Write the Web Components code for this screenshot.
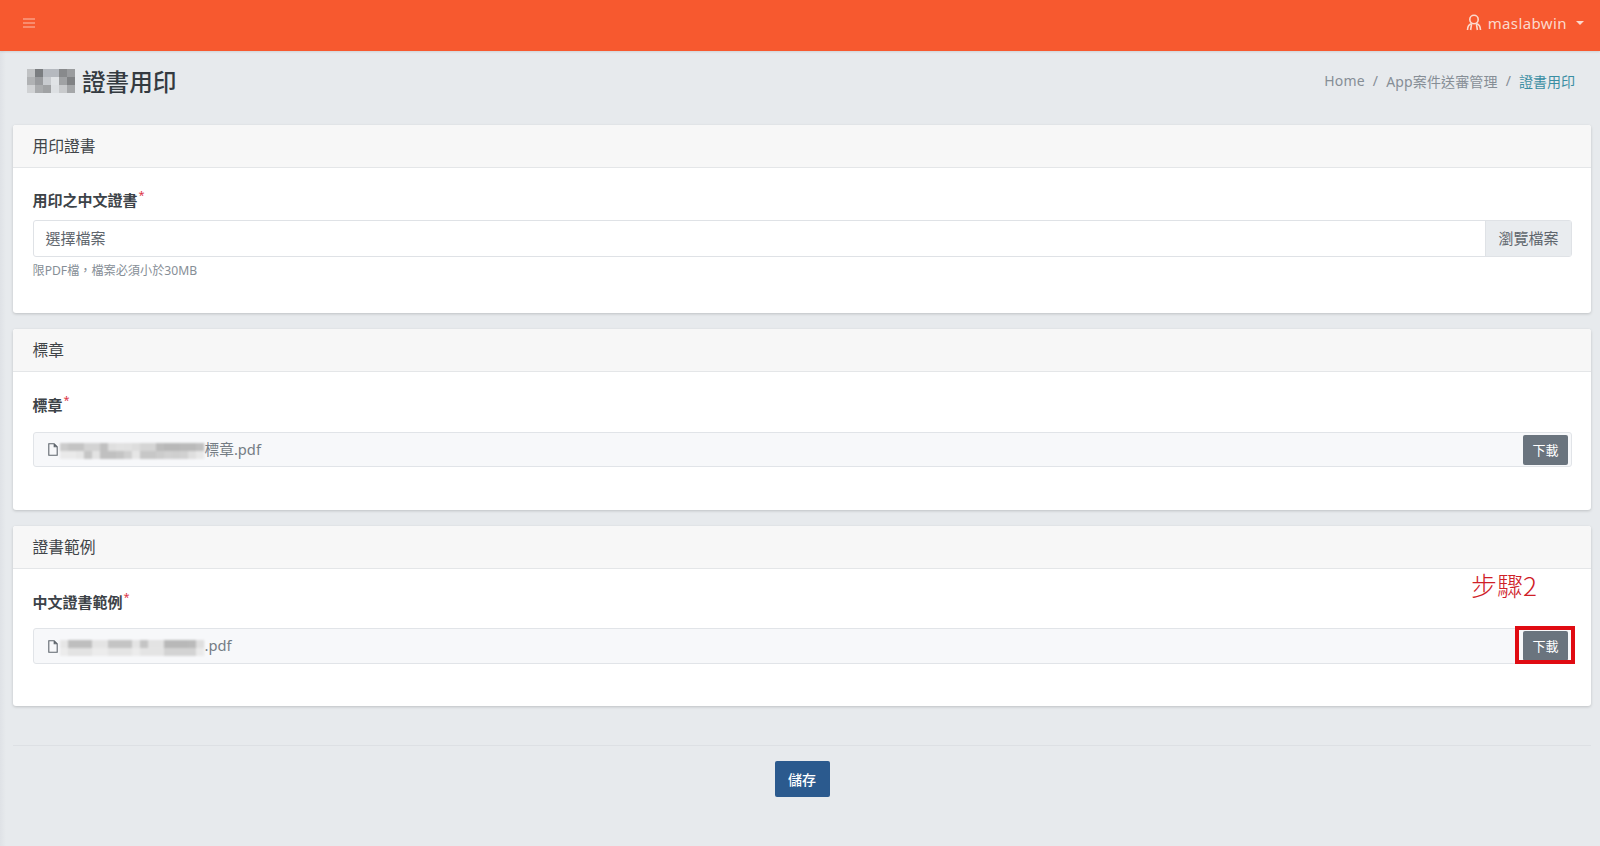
<!DOCTYPE html>
<html lang="zh-Hant">
<head>
<meta charset="utf-8">
<title>證書用印</title>
<style>
    html, body { margin: 0; padding: 0; }
    body {
        background: #e7eaed;
        color: #343a40;
        font-family: "Noto Sans", "Noto Sans CJK TC", sans-serif;
        font-size: 14px;
        height: 846px;
        overflow: hidden;
    }
</style>
</head>
<body>
<app-page>
    <app-topbar slot="top" user="maslabwin"></app-topbar>
    <page-heading slot="top" title="證書用印"></page-heading>

    <form-card heading="用印證書">
        <field-label style="margin:-1px 0 8px">用印之中文證書</field-label>
        <file-picker placeholder="選擇檔案" button="瀏覽檔案" hint="限PDF檔，檔案必須小於30MB"></file-picker>
    </form-card>

    <form-card heading="標章" style="margin-top:16px">
        <field-label style="margin-bottom:15px">標章</field-label>
        <file-row suffix="標章.pdf"
            top="d4d4d4 cccccc cccccc dcdcdc dcdcdc c8c8c8 e8e8e8 ebebeb eaeaea e6e6e6 dedede dedede c4c4c4 c0c0c0 c0c0c0 c2c2c2 c2c2c2 c8c8c8"
            bottom="f4f4f4 f4f4f4 f0f0f0 cdcdcd ececec c8c8c8 c8c8c8 cccccc d8d8d8 f0f0f0 cfcfcf cfcfcf d4d4d4 dadada d8d8d8 dadada e8e8e8 f2f2f2"></file-row>
    </form-card>

    <form-card heading="證書範例" style="margin-top:16px">
        <field-label style="margin-bottom:14px">中文證書範例</field-label>
        <file-row suffix=".pdf" tall style="margin-bottom:-1px"
            top="f0f0f0 c6c6c6 c6c6c6 c6c6c6 eeeeee eeeeee cccccc cccccc cccccc eeeeee cccccc ececec ececec c0c0c0 c0c0c0 c0c0c0 c2c2c2 e8e8e8"
            bottom="f6f6f6 ececec ececec ececec f6f6f6 f6f6f6 eeeeee eeeeee eeeeee f6f6f6 eeeeee eeeeee eeeeee dcdcdc dcdcdc dcdcdc dcdcdc f4f4f4"></file-row>
    </form-card>

    <save-bar></save-bar>
    <step-note></step-note>
</app-page>

<script>
    const icons = {
        menu: `<svg width="12" height="10" viewBox="0 0 12 10"><path d="M0 1h12M0 5h12M0 9h12" stroke="currentColor" stroke-width="1.2"/></svg>`,
        user: `<svg width="16" height="17" viewBox="0 0 16 17" fill="none" stroke="currentColor" stroke-width="1.6"><circle cx="8" cy="5.5" r="4.2"/><path d="M1.5 16c0-4 2-6 4.2-6.6M14.5 16c0-4-2-6-4.2-6.6M5.7 9.4 4.6 16M10.3 9.4l1.1 6.6"/></svg>`,
        file: `<svg width="10" height="13" viewBox="0 0 10 13" fill="none" stroke="currentColor" stroke-width="1.1"><path d="M.8.8h5.4l3 3v8.4H.8zM6.2.8v3h3"/></svg>`,
    };

    class AppPage extends HTMLElement {
        constructor() {
            super();
            this.attachShadow({ mode: "open" }).innerHTML = `
            <style>
                :host {
                    display: block;
                    position: relative;
                    height: 846px;
                    background: linear-gradient(90deg, #dfe2e6, #e7eaed 6px);
                }
                main { padding: 0 9px 0 13px; }
            </style>
            <slot name="top"></slot>
            <main><slot></slot></main>
            `;
        }
    }

    class AppTopbar extends HTMLElement {
        constructor() {
            super();
            this.attachShadow({ mode: "open" }).innerHTML = `
            <style>
                :host {
                    display: flex;
                    align-items: center;
                    justify-content: space-between;
                    height: 46px;
                    padding: 0 16px 5px 23px;
                    background: #f7592f;
                    color: #fbd9cd;
                    box-shadow: 0 1px 2px rgba(0,0,0,.1);
                }
                .user { display: flex; align-items: center; gap: 6px; font-size: 15px; letter-spacing: .4px; }
                .menu { display: flex; opacity: .8; }
                .user svg { margin-top: -1px; }
                .caret { width: 0; height: 0; margin-left: 3px; border: 4px solid transparent; border-top-color: currentColor; border-bottom: 0; }
            </style>
            <span class="menu">${icons.menu}</span>
            <span class="user">${icons.user}<span>${this.getAttribute("user")}</span><i class="caret"></i></span>
            `;
        }
    }

    class BlurBlock extends HTMLElement {
        constructor() {
            super();
            const w = +this.getAttribute("width");
            const h = +this.getAttribute("height");
            const cell = +this.getAttribute("cell") || 8;
            const cells = (this.getAttribute("cells") || "").trim().split(/\s+/);
            const cols = Math.round(w / cell);
            const rects = cells.map((c, i) =>
                `<rect x="${(i % cols) * cell}" y="${Math.floor(i / cols) * cell}" width="${cell + .3}" height="${cell + .3}" fill="#${c}"/>`
            ).join("");
            this.attachShadow({ mode: "open" }).innerHTML = `
            <style>:host { display: inline-block; line-height: 0; flex: none; }</style>
            <svg width="${w}" height="${h}" viewBox="0 0 ${w} ${h}">${rects}</svg>
            `;
        }
    }

    class PageHeading extends HTMLElement {
        constructor() {
            super();
            this.attachShadow({ mode: "open" }).innerHTML = `
            <style>
                :host {
                    display: flex;
                    align-items: center;
                    justify-content: space-between;
                    height: 60px;
                    padding: 0 25px 14px 27px;
                }
                h1 { display: flex; align-items: center; gap: 7px; margin: 0; font-size: 23.6px; font-weight: 500; color: #343a40; }
                h1 blur-block { filter: blur(.5px); }
                nav { display: flex; gap: 8px; margin-bottom: 1px; font-size: 14px; color: #868e96; letter-spacing: .15px; }
                nav b { font-weight: 400; color: #3a8ea3; letter-spacing: 0; }
            </style>
            <h1>
                <blur-block width="48" height="24" cell="8" cells="c0c2c4 7a7d80 b5b9bf b5b9bf 888a8c 9a9c9e b0b2b4 999b9e c8cbcf e0e3e6 a0a2a4 808284 d0d2d4 aaacae a0a2a4 dde0e3 c8cacc a5a7a9"></blur-block>
                <span>${this.getAttribute("title")}</span>
            </h1>
            <nav><span>Home</span><span>/</span><span>App案件送審管理</span><span>/</span><b>${this.getAttribute("title")}</b></nav>
            `;
            this.removeAttribute("title");
        }
    }

    class FormCard extends HTMLElement {
        constructor() {
            super();
            this.attachShadow({ mode: "open" }).innerHTML = `
            <style>
                :host {
                    display: block;
                    background: #fff;
                    border-radius: 3px;
                    box-shadow: 0 1px 3px rgba(0,0,0,.18);
                    overflow: hidden;
                }
                header {
                    height: 42px;
                    line-height: 43px;
                    padding: 0 19.5px;
                    background: #f7f7f7;
                    border-bottom: 1px solid #e4e6e8;
                    font-size: 15.75px;
                    color: #3f4448;
                }
                .body { padding: 21px 19px 43px 19.5px; }
            </style>
            <header>${this.getAttribute("heading")}</header>
            <div class="body"><slot></slot></div>
            `;
        }
    }

    class FieldLabel extends HTMLElement {
        constructor() {
            super();
            this.attachShadow({ mode: "open" }).innerHTML = `
            <style>
                :host { display: block; height: 24px; line-height: 24px; margin-bottom: 7px; font-size: 15px; font-weight: 700; color: #3d4348; }
                sup { position: relative; top: -1px; margin-left: 1px; color: #dc3545; font-size: 11px; font-weight: 400; line-height: 0; vertical-align: 6px; }
            </style>
            <slot></slot><sup>*</sup>
            `;
        }
    }

    class FilePicker extends HTMLElement {
        constructor() {
            super();
            this.attachShadow({ mode: "open" }).innerHTML = `
            <style>
                :host { display: block; margin-bottom: -9px; }
                .box {
                    display: flex;
                    height: 35px;
                    border: 1px solid #dfe2e6;
                    border-radius: 3px;
                    font-size: 15px;
                    line-height: 35px;
                    color: #5f666d;
                }
                .name { flex: 1; padding-left: 12px; }
                .btn { width: 85px; text-align: center; background: #e9ecef; border-left: 1px solid #dfe2e6; }
                small { display: block; margin-top: 6px; font-size: 12.15px; line-height: 16px; color: #868e96; }
            </style>
            <div class="box">
                <span class="name">${this.getAttribute("placeholder")}</span>
                <span class="btn">${this.getAttribute("button")}</span>
            </div>
            <small>${this.getAttribute("hint")}</small>
            `;
        }
    }

    class FileRow extends HTMLElement {
        constructor() {
            super();
            const tall = this.hasAttribute("tall");
            const cells = this.getAttribute("top") + " " + this.getAttribute("bottom");
            this.attachShadow({ mode: "open" }).innerHTML = `
            <style>
                :host {
                    display: flex;
                    align-items: center;
                    height: ${tall ? 34 : 33}px;
                    border: 1px solid #e1e4e8;
                    border-radius: 3px;
                    background: #f7f8fa;
                    color: #757d85;
                    font-size: 14.7px;
                    padding: 0 3px 0 14px;
                }
                .icon { display: flex; margin-right: 2px; color: #5f666d; }
                blur-block { margin-top: 3px; filter: blur(1.3px) brightness(.96); }
                .name { flex: 1; padding-bottom: 2px; }
                .btn {
                    width: 45px;
                    height: 30px;
                    line-height: 30px;
                    text-align: center;
                    border-radius: 2px;
                    background: #6a747e;
                    color: #fff;
                    font-size: 13px;
                }
            </style>
            <span class="icon">${icons.file}</span>
            <blur-block width="145" height="16" cell="8" cells="${cells}"></blur-block>
            <span class="name">${this.getAttribute("suffix")}</span>
            <span class="btn">下載</span>
            `;
        }
    }

    class SaveBar extends HTMLElement {
        constructor() {
            super();
            this.attachShadow({ mode: "open" }).innerHTML = `
            <style>
                :host {
                    display: flex;
                    justify-content: center;
                    margin-top: 39px;
                    padding-top: 15px;
                    border-top: 1px solid #dde0e4;
                }
                button {
                    width: 55px;
                    height: 36px;
                    padding: 0;
                    border: 0;
                    border-radius: 2px;
                    background: #2b5a8e;
                    color: #fff;
                    font: 500 14px "Noto Sans", "Noto Sans CJK TC", sans-serif;
                }
            </style>
            <button>儲存</button>
            `;
        }
    }

    // annotation drawn on top of the screenshot, not part of the page flow
    class StepNote extends HTMLElement {
        constructor() {
            super();
            this.attachShadow({ mode: "open" }).innerHTML = `
            <style>
                :host { display: block; }
                span {
                    position: absolute;
                    left: 1471px;
                    top: 567px;
                    font: 300 26px/36px "Noto Sans CJK TC", "Noto Sans", sans-serif;
                    color: #cf2027;
                }
                i {
                    position: absolute;
                    left: 1515px;
                    top: 626px;
                    width: 52px;
                    height: 30px;
                    border: 4px solid #e00b12;
                }
            </style>
            <span>步驟2</span><i></i>
            `;
        }
    }

    customElements.define("app-page", AppPage);
    customElements.define("app-topbar", AppTopbar);
    customElements.define("blur-block", BlurBlock);
    customElements.define("page-heading", PageHeading);
    customElements.define("form-card", FormCard);
    customElements.define("field-label", FieldLabel);
    customElements.define("file-picker", FilePicker);
    customElements.define("file-row", FileRow);
    customElements.define("save-bar", SaveBar);
    customElements.define("step-note", StepNote);
</script>
</body>
</html>
